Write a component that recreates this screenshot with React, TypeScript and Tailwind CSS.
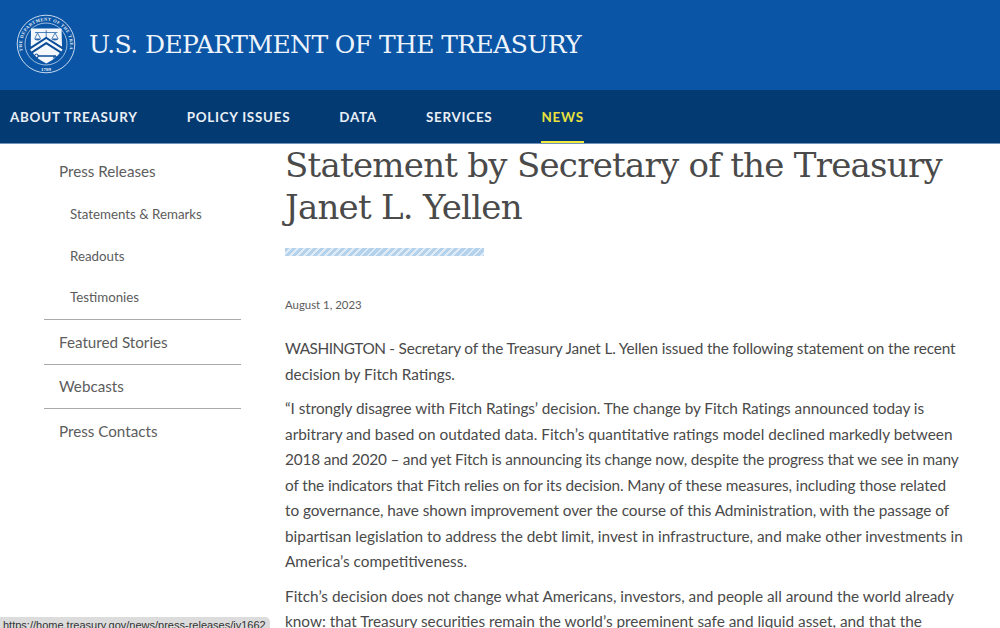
const navItems = [
  { label: 'ABOUT TREASURY', active: false },
  { label: 'POLICY ISSUES', active: false },
  { label: 'DATA', active: false },
  { label: 'SERVICES', active: false },
  { label: 'NEWS', active: true },
];

const bodyFont = "font-['Lato','Noto_Sans',sans-serif]";

function Seal() {
  return (
    <svg viewBox="0 0 60 60" className="w-[60px] h-[60px]" fill="none">
      <circle cx="30" cy="30" r="28.8" stroke="#dbe7f5" strokeWidth="0.9" />
      <circle cx="30" cy="30" r="21" stroke="#dbe7f5" strokeWidth="0.7" />
      <defs>
        <path id="sealArc" d="M 6.8 37 A 24 24 0 1 1 53.2 37" />
      </defs>
      <text fill="#eef3fa" fontSize="4.5" fontWeight="700" fontFamily="'Liberation Serif', serif">
        <textPath href="#sealArc" textLength="100">THE DEPARTMENT OF THE TREASURY</textPath>
      </text>
      <text x="30" y="56.5" textAnchor="middle" fill="#eef3fa" fontSize="5" fontWeight="700" fontFamily="'Liberation Serif', serif">
        1789
      </text>
      {/* shield */}
      <path d="M15 14.5 H45.5 L46 32 C45.5 41 37 46 30.3 49.5 C23.5 46 15 41 14.8 32 Z" fill="#f4f7fb" />
      {/* scales */}
      <path d="M19 18.5 H41.5 M30.2 16 V27 M21.5 19 L18.8 24.5 M21.5 19 L24.5 24.5 M39 19 L36 24.5 M39 19 L42 24.5" stroke="#2a64ab" strokeWidth="0.8" />
      <path d="M18.3 24.5 H25 C24.5 27 18.8 27 18.3 24.5 Z M35.5 24.5 H42.5 C42 27 36 27 35.5 24.5 Z" fill="#2a64ab" />
      {/* chevron */}
      <path d="M14.8 36.5 L30.2 26.5 L46 36.5" stroke="#0a4c98" strokeWidth="6.4" />
      <path d="M14.8 36.5 L30.2 26.5 L46 36.5" stroke="#f4f7fb" strokeWidth="2.4" />
      {/* key */}
      <path d="M21.5 42 H40 M38 42 V44.5 M40 42 V44.5" stroke="#0a4c98" strokeWidth="1.3" />
      <circle cx="20.5" cy="42" r="1.9" stroke="#0a4c98" strokeWidth="1" />
    </svg>
  );
}

export default function App() {
  return (
    <div className={`relative w-[1000px] h-[628px] overflow-hidden bg-white ${bodyFont}`}>
      {/* Header */}
      <header className="h-[90px] bg-[#0a55a6] flex items-center pl-4 pb-[3px] gap-[13px]">
        <Seal />
        <div className="pt-[2px] font-['DejaVu_Serif',serif] text-[25px] text-[#eef4fb] tracking-[-0.58px] whitespace-nowrap">
          U.S. DEPARTMENT OF THE TREASURY
        </div>
      </header>

      {/* Nav */}
      <nav className="h-[54px] bg-[#043a72] flex items-stretch pl-[10px] gap-[49px] border-b border-[#6f93bb]">
        {navItems.map((item) => (
          <div
            key={item.label}
            className={`flex items-center pt-[4px] border-b-[2px] text-[13.4px] font-bold tracking-[0.75px] ${
              item.active ? 'text-[#e9e23c] border-[#f2e93a]' : 'text-[#e9eff6] border-transparent'
            }`}
          >
            {item.label}
          </div>
        ))}
      </nav>

      <div className="flex">
        {/* Sidebar */}
        <aside className="w-[197px] ml-[44px] mr-[44px] shrink-0 pt-[15px] text-[#5c5c5c]">
          <div className="pl-[15px] text-[15.2px] leading-[24px]">Press Releases</div>
          <div className="pl-[26px] pt-[21px] text-[13.3px] flex flex-col gap-[20.5px] pb-[11px] border-b border-[#a9a9a9]">
            <div className="leading-[21px]">Statements &amp; Remarks</div>
            <div className="leading-[21px]">Readouts</div>
            <div className="leading-[21px]">Testimonies</div>
          </div>
          <div className="pl-[15px] text-[15.2px] leading-[44px] border-b border-[#a9a9a9]">Featured Stories</div>
          <div className="pl-[15px] text-[15.2px] leading-[43px] border-b border-[#a9a9a9]">Webcasts</div>
          <div className="pl-[15px] text-[15.2px] leading-[44px]">Press Contacts</div>
        </aside>

        {/* Article */}
        <main className="w-[715px] whitespace-nowrap">
          <h1 className="font-['DejaVu_Serif',serif] text-[34px] tracking-[-0.74px] leading-[42px] text-[#4a4a4a]">
            Statement by Secretary of the Treasury
            <br />
            Janet L. Yellen
          </h1>
          <div className="mt-[20px] w-[199px] h-[8px] bg-[repeating-linear-gradient(135deg,#b4d2ec_0px,#b4d2ec_3px,#dfebf6_3px,#dfebf6_5px)]" />
          <div className="mt-[40px] text-[11.4px] leading-[18px] text-[#5c5c5c]">August 1, 2023</div>
          <div className="mt-[22px] text-[15.35px] leading-[25.5px] text-[#4a4a4a] flex flex-col gap-[9px]">
            <p>
              <span className="tracking-[-0.14px]">
                <span className="tracking-[-0.5px]">WASHINGTON</span> - Secretary of the Treasury Janet L. Yellen issued the following statement on the recent
              </span>
              <br />
              decision by Fitch Ratings.
            </p>
            <p>
              <span className="tracking-[-0.05px]">“I strongly disagree with Fitch Ratings’ decision. The change by Fitch Ratings announced today is</span>
              <br />
              arbitrary and based on outdated data. Fitch’s quantitative ratings model declined markedly between
              <br />
              <span className="tracking-[-0.17px]">2018 and 2020 – and yet Fitch is announcing its change now, despite the progress that we see in many</span>
              <br />
              <span className="tracking-[-0.1px]">of the indicators that Fitch relies on for its decision. Many of these measures, including those related</span>
              <br />
              <span className="tracking-[-0.07px]">to governance, have shown improvement over the course of this Administration, with the passage of</span>
              <br />
              bipartisan legislation to address the debt limit, invest in infrastructure, and make other investments in
              <br />
              America’s competitiveness.
            </p>
            <p>
              Fitch’s decision does not change what Americans, investors, and people all around the world already
              <br />
              know: that Treasury securities remain the world’s preeminent safe and liquid asset, and that the
            </p>
          </div>
        </main>
      </div>

      {/* Browser status bubble */}
      <div className="absolute left-0 bottom-0 h-[11px] w-[270px] bg-[#dcdcdc] rounded-tr-[5px] overflow-hidden pl-[3px] text-[11px] leading-[17px] text-[#333] font-['Liberation_Sans',sans-serif] whitespace-nowrap">
        https://home.treasury.gov/news/press-releases/jy1662
      </div>
    </div>
  );
}
